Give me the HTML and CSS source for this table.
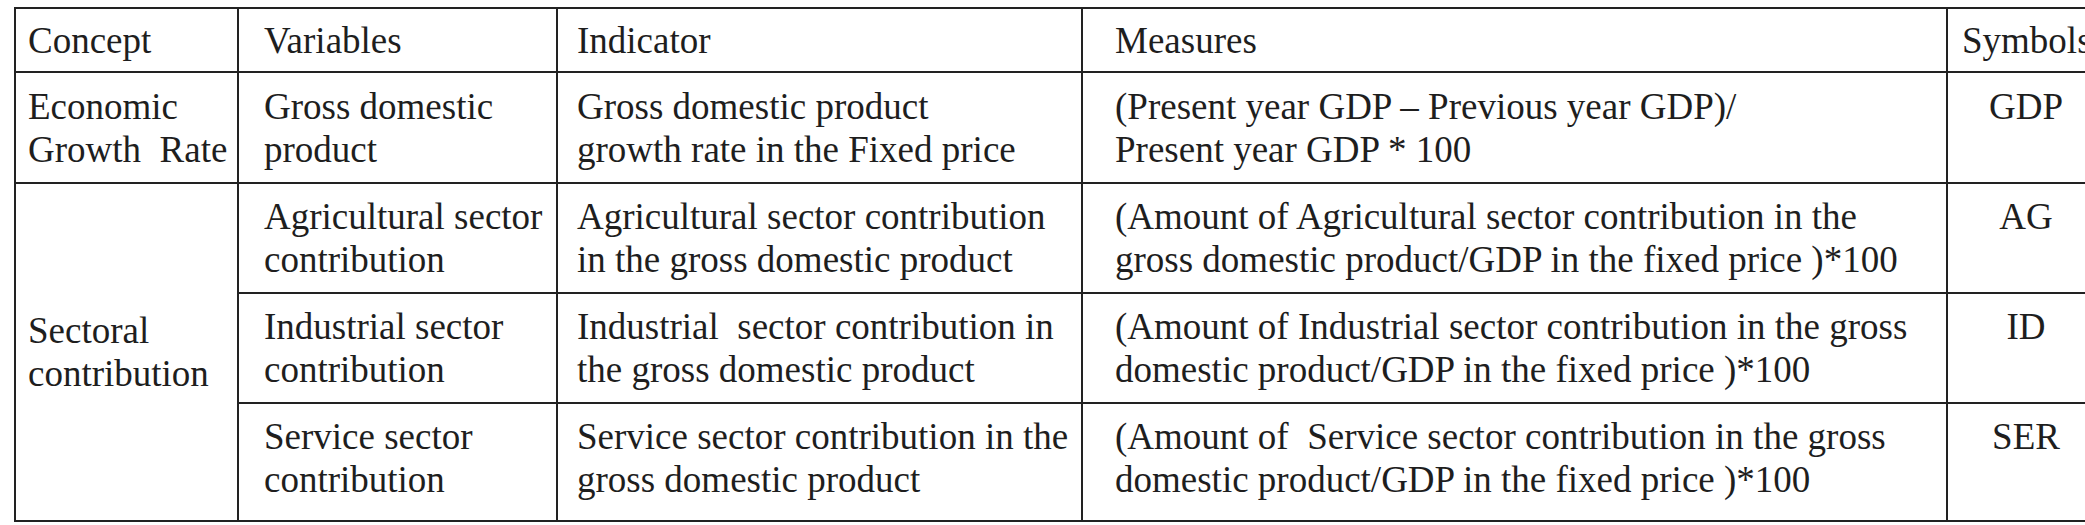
FILE: index.html
```html
<!DOCTYPE html>
<html lang="en">
<head>
<meta charset="utf-8">
<title>Variables table</title>
<link rel="stylesheet" href="styles.css">
</head>
<body>
<table class="vars">
  <colgroup>
    <col class="c-concept">
    <col class="c-var">
    <col class="c-ind">
    <col class="c-meas">
    <col class="c-sym">
  </colgroup>
  <thead>
    <tr class="head">
      <th class="concept">Concept</th>
      <th class="var">Variables</th>
      <th class="ind">Indicator</th>
      <th class="meas">Measures</th>
      <th class="sym-h">Symbols</th>
    </tr>
  </thead>
  <tbody>
    <tr class="first">
      <td class="concept">Economic<br>Growth&nbsp; Rate</td>
      <td class="var">Gross domestic<br>product</td>
      <td class="ind">Gross domestic product<br>growth rate in the Fixed price</td>
      <td class="meas">(Present year GDP – Previous year GDP)/<br>Present year GDP * 100</td>
      <td class="sym">GDP</td>
    </tr>
    <tr>
      <td class="concept mid" rowspan="3">Sectoral<br>contribution</td>
      <td class="var">Agricultural sector<br>contribution</td>
      <td class="ind">Agricultural sector contribution<br>in the gross domestic product</td>
      <td class="meas">(Amount of Agricultural sector contribution in the<br>gross domestic product/GDP in the fixed price )*100</td>
      <td class="sym">AG</td>
    </tr>
    <tr>
      <td class="var">Industrial sector<br>contribution</td>
      <td class="ind">Industrial&nbsp; sector contribution in<br>the gross domestic product</td>
      <td class="meas">(Amount of Industrial sector contribution in the gross<br>domestic product/GDP in the fixed price )*100</td>
      <td class="sym">ID</td>
    </tr>
    <tr class="last">
      <td class="var">Service sector<br>contribution</td>
      <td class="ind">Service sector contribution in the<br>gross domestic product</td>
      <td class="meas">(Amount of&nbsp; Service sector contribution in the gross<br>domestic product/GDP in the fixed price )*100</td>
      <td class="sym">SER</td>
    </tr>
  </tbody>
</table>
</body>
</html>
```

FILE: styles.css
```css
html, body {
  margin: 0;
  padding: 0;
  background: #ffffff;
  overflow: hidden;
}

body {
  padding: 7px 0 0 14px;
  font-family: "Liberation Serif", "Times New Roman", serif;
  color: #1e1e1e;
}

.vars {
  border-collapse: collapse;
  table-layout: fixed;
  width: 2090px;
  font-size: 37px;
  line-height: 43px;
}

.c-concept { width: 223px; }
.c-var { width: 319px; }
.c-ind { width: 525px; }
.c-meas { width: 865px; }
.c-sym { width: 158px; }

.vars th,
.vars td {
  border: 2px solid #222222;
  vertical-align: top;
  text-align: left;
  font-weight: normal;
  white-space: nowrap;
  padding: 11px 4px 11px 12px;
}

.vars .head th {
  padding-top: 10px;
  padding-bottom: 9px;
}

.vars .first td { padding-top: 12px; }

.vars .concept { padding-left: 12px; }
.vars .var { padding-left: 25px; }
.vars .ind { padding-left: 19px; }
.vars .meas { padding-left: 32px; }
.vars .sym-h { padding-left: 14px; }

.vars .sym {
  text-align: center;
  padding-left: 0;
  padding-right: 0;
}

.vars .mid { vertical-align: middle; }

.vars .last td { padding-bottom: 19px; }
```
